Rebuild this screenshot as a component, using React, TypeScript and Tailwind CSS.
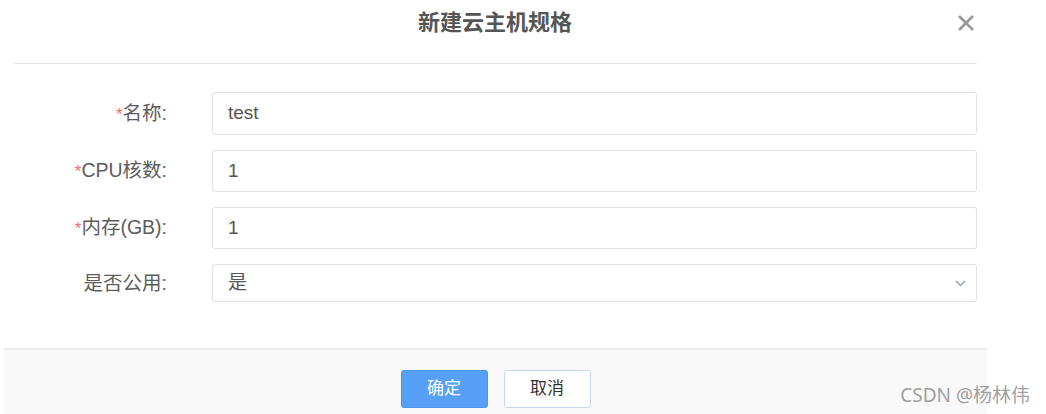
import React from "react";

const font = { fontFamily: '"Liberation Sans", "Noto Sans CJK SC", sans-serif' };

function Label({ text, required }: { text: string; required?: boolean }) {
  return (
    <div className="w-[212px] shrink-0 pr-[45px] text-right text-[19.5px] leading-[22px] text-[#5c5c5c]">
      {required && <span className="text-[#f56c6c] text-[17px]">*</span>}
      {text}
    </div>
  );
}

function TextInput({ value, tall }: { value: string; tall?: boolean }) {
  return (
    <div
      className={
        (tall ? "h-[43px] " : "h-[42px] ") +
        "w-[765px] border border-[#e2e2e2] rounded-[3px] bg-white flex items-center pl-[15px] text-[19px] text-[#555]"
      }
    >
      {value}
    </div>
  );
}

export default function App() {
  return (
    <div className="relative w-[1046px] h-[414px] bg-white overflow-hidden flex flex-col" style={font}>
      {/* Header */}
      <div className="ml-[13px] w-[964px] h-[64px] border-b border-[#e6e6e6] grid grid-cols-[1fr_auto_1fr] items-start pt-[12px]">
        <div />
        <div className="text-[22px] leading-[22px] font-bold text-[#555]">新建云主机规格</div>
        <div className="justify-self-end mr-[2px] mt-[2px]">
          <svg width="18" height="18" viewBox="0 0 18 18">
            <path d="M2 2 L16 16 M16 2 L2 16" stroke="#9a9a9a" strokeWidth="2.8" strokeLinecap="butt" />
          </svg>
        </div>
      </div>

      {/* Form */}
      <div className="flex flex-col gap-[15px] pt-[28px] pb-[46px]">
        <div className="flex items-center">
          <Label text="名称:" required />
          <TextInput value="test" tall />
        </div>
        <div className="flex items-center">
          <Label text="CPU核数:" required />
          <TextInput value="1" />
        </div>
        <div className="flex items-center">
          <Label text="内存(GB):" required />
          <TextInput value="1" />
        </div>
        <div className="flex items-center">
          <Label text="是否公用:" />
          <div className="w-[765px] h-[38px] border border-[#e2e2e2] rounded-[3px] bg-white flex items-center justify-between pl-[15px] pr-[10px] text-[19px] text-[#555]">
            <span>是</span>
            <svg width="11" height="7" viewBox="0 0 11 7">
              <path d="M1 1 L5.5 5.5 L10 1" stroke="#9aa3b3" strokeWidth="1.5" fill="none" />
            </svg>
          </div>
        </div>
      </div>

      {/* Footer */}
      <div className="ml-[4px] w-[983px] flex-1 bg-[#f9f9f9] border-t-2 border-[#ebebeb] pt-[20px] flex justify-center gap-[16px]">
        <button className="w-[87px] h-[38px] rounded-[3px] bg-[#56a0f8] border border-[#4c96ee] text-white text-[17px]">
          确定
        </button>
        <button className="w-[87px] h-[38px] rounded-[3px] bg-white border border-[#c4d8f2] text-[#333] text-[17px]">
          取消
        </button>
      </div>

      <div
        className="absolute right-[16px] top-[385px] text-[19px] leading-[20px] text-[#a0a0a0]"
        style={{ fontFamily: '"Noto Sans", "Noto Sans CJK SC", sans-serif' }}
      >
        CSDN @杨林伟
      </div>
    </div>
  );
}
